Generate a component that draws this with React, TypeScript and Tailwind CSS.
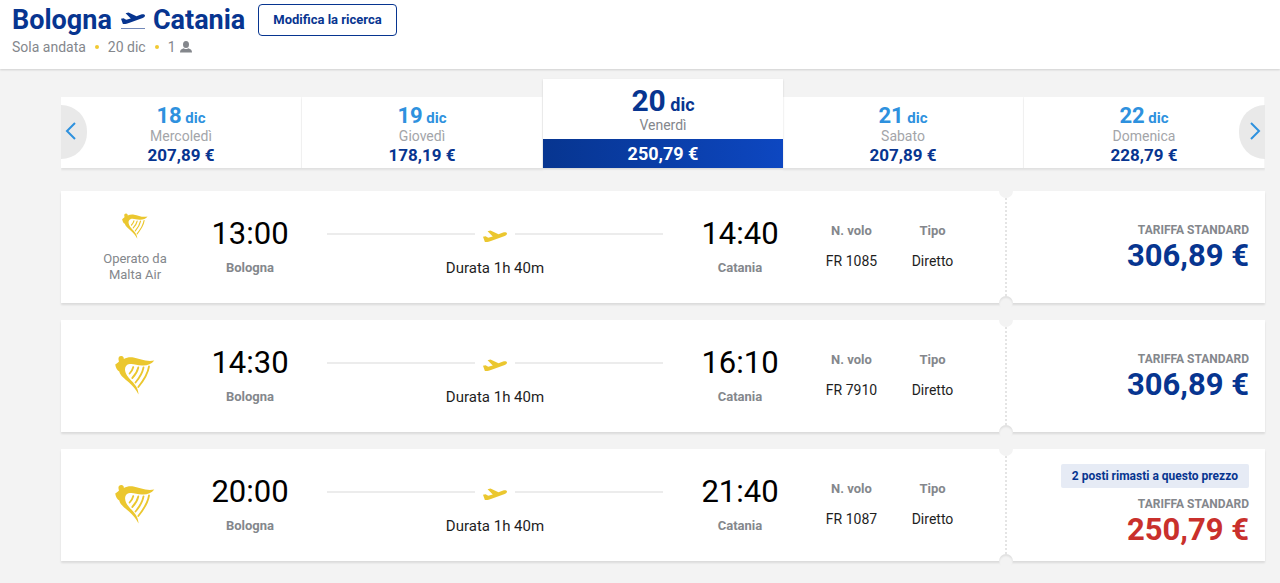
type Day = {
  day: string;
  weekday: string;
  price: string;
  selected?: boolean;
};

type Flight = {
  departure: string;
  arrival: string;
  number: string;
  price: string;
  operatedBy?: string;
  seatsLeft?: string;
};

const days: Day[] = [
  { day: "18", weekday: "Mercoledì", price: "207,89 €" },
  { day: "19", weekday: "Giovedì", price: "178,19 €" },
  { day: "20", weekday: "Venerdì", price: "250,79 €", selected: true },
  { day: "21", weekday: "Sabato", price: "207,89 €" },
  { day: "22", weekday: "Domenica", price: "228,79 €" },
];

const flights: Flight[] = [
  { departure: "13:00", arrival: "14:40", number: "FR 1085", price: "306,89 €", operatedBy: "Malta Air" },
  { departure: "14:30", arrival: "16:10", number: "FR 7910", price: "306,89 €" },
  {
    departure: "20:00",
    arrival: "21:40",
    number: "FR 1087",
    price: "250,79 €",
    seatsLeft: "2 posti rimasti a questo prezzo",
  },
];

function Plane({ className }: { className: string }) {
  return (
    <svg viewBox="0 0 24 13" className={className} fill="currentColor" aria-hidden="true">
      <path d="M0 6.800l2.600-.6 2.600 1.500 4.600-1.300L4.600 1.200 7.500.4l8 3.900 4.600-1.700c1.700-.6 3.400-.3 3.800.6.4 1-.6 2-2.200 2.700L8.600 10.800c-2.500.9-5 1.600-6.700 1.200z" />
    </svg>
  );
}

function Harp({ className }: { className: string }) {
  return (
    <svg viewBox="0 0 40 40" className={className} aria-hidden="true">
      <path
        fill="#ebc72f"
        d="M3.500 4.200C3.200 2 4.600.8 6.300.9c1.800.1 2.800 1.500 2.500 3.100C11.500 2.500 15 1.900 18.500 2.500c6.500 1.100 12 4.500 20.800 3-2.800 3.800-7.300 5.300-12.300 5C21.500 10.200 17.500 8 13.500 9.300c-3.700 1.300-4.200 5.200-2.500 9.200 2.300 5.200 8.500 9 11 14.500 1 2.200 1.300 4.300 1.500 6.500-2.500-4.800-5.500-8.500-9.500-12C9.500 23.600 5 20.500 4.300 16.500 2.300 15.500.8 13 .2 9.500c1.100-.4 2.400-1.500 3.900-3.200-.4-.6-.6-1.300-.6-2.100z"
      />
      <g fill="none" stroke="#ebc72f" strokeWidth="1.800" strokeLinecap="round">
        <path d="M18.300 12C17.800 14 16.500 16.500 14.600 18.500" />
        <path d="M23.300 12.500C22.500 16 20.200 20 17.300 23" />
        <path d="M28.500 12.500C27.500 17.500 24.300 23 20.500 27.500" />
        <path d="M34 11.500C33 18 28.500 25.500 23.300 32" />
      </g>
    </svg>
  );
}

function Passenger() {
  return (
    <svg viewBox="0 0 12 12" className="size-3" fill="currentColor" aria-hidden="true">
      <ellipse cx="6" cy="3.500" rx="3" ry="3.500" />
      <path d="M0 11.500c0-2.500 1-3.500 3.800-4.300a3.500 3.500 0 004.400 0C11 8 12 9 12 11.500z" />
    </svg>
  );
}

function Header() {
  return (
    <header className="relative h-[69px] bg-white px-3 pt-1 shadow-[0_1px_2px_rgba(0,0,0,0.15)]">
      <div className="flex h-8 items-center">
        <h1 className="flex items-center text-[27px] font-bold text-[#073590]">
          Bologna
          <span className="mr-2 ml-[9px] flex w-6 flex-col gap-[3px]">
            <Plane className="h-[13px] w-6" />
            <span className="h-px w-full bg-[#7288b8]" />
          </span>
          Catania
        </h1>
        <button
          type="button"
          className="ml-[13px] h-8 rounded-sm border border-[#073590] px-[14px] text-[13px] font-bold text-[#073590]"
        >
          Modifica la ricerca
        </button>
      </div>
      <p className="mt-px flex items-center gap-[9px] text-sm text-[#84878c]">
        Sola andata
        <span className="size-1 rounded-full bg-[#f1c933]" />
        20 dic
        <span className="size-1 rounded-full bg-[#f1c933]" />
        <span className="flex items-center gap-1">
          1
          <Passenger />
        </span>
      </p>
    </header>
  );
}

function DayTab({ day, weekday, price, selected }: Day) {
  if (selected) {
    return (
      <button
        type="button"
        className="relative flex h-[89px] flex-1 flex-col items-center bg-white pt-1 shadow-[0_1px_2px_rgba(0,0,0,0.15)]"
      >
        <span className="text-[30px] leading-9 font-bold text-[#073590]">
          {day}
          <span className="text-lg"> dic</span>
        </span>
        <span className="text-sm leading-3 text-[#84878c]">{weekday}</span>
        <span className="mt-auto w-full bg-linear-to-r from-[#073590] to-[#0d47c1] text-lg leading-[29px] font-bold text-white">
          {price}
        </span>
      </button>
    );
  }
  return (
    <button
      type="button"
      className="flex h-[71px] flex-1 flex-col items-center border-r border-[#f6f6f6] bg-white pt-[7px] shadow-[0_2px_2px_rgba(0,0,0,0.08)]"
    >
      <span className="text-[22px] leading-6 font-bold text-[#2e91de]">
        {day}
        <span className="text-[15px]"> dic</span>
      </span>
      <span className="text-sm leading-3 text-[#a3a5a9]">{weekday}</span>
      <span className="mt-px text-[17px] leading-6 font-bold text-[#073590]">{price}</span>
    </button>
  );
}

function DateCarousel() {
  return (
    <nav aria-label="Date" className="relative flex items-end overflow-x-clip">
      {days.map((day) => (
        <DayTab key={day.day} {...day} />
      ))}
      <button
        type="button"
        aria-label="Giorni precedenti"
        className="absolute bottom-[9px] left-0 flex h-[54px] w-[26px] items-center rounded-r-full bg-[#e9e9e9] pb-0.5 pl-1 text-[#2e91de]"
      >
        <svg viewBox="0 0 12 18" className="h-[18px] w-3" fill="none" stroke="currentColor" strokeWidth="2">
          <path d="M10 1L2 9l8 8" />
        </svg>
      </button>
      <button
        type="button"
        aria-label="Giorni successivi"
        className="absolute right-0 bottom-[9px] flex h-[54px] w-[26px] items-center justify-end rounded-l-full bg-[#e9e9e9] pr-1 pb-0.5 text-[#2e91de]"
      >
        <svg viewBox="0 0 12 18" className="h-[18px] w-3" fill="none" stroke="currentColor" strokeWidth="2">
          <path d="M2 1l8 8-8 8" />
        </svg>
      </button>
    </nav>
  );
}

function Stop({ time, city }: { time: string; city: string }) {
  return (
    <div className="w-[82px] text-center">
      <p className="text-[31px] leading-10 text-black">{time}</p>
      <p className="mt-1 text-[13px] leading-5 font-bold text-[#84878c]">{city}</p>
    </div>
  );
}

function Detail({ label, value }: { label: string; value: string }) {
  return (
    <div className="w-[81px] text-center">
      <dt className="text-[13px] leading-5 font-bold text-[#84878c]">{label}</dt>
      <dd className="mt-[10px] text-sm leading-5 text-[#1e1e1e]">{value}</dd>
    </div>
  );
}

function FlightCard({ flight }: { flight: Flight }) {
  return (
    <li className="flex h-28 bg-white shadow-[0_2px_2px_rgba(0,0,0,0.1)]">
      <div className="flex flex-1 items-center pr-8 pb-0.5">
        <div className="flex w-[148px] flex-col items-center">
          {flight.operatedBy ? (
            <>
              <Harp className="mt-1 size-[26px]" />
              <p className="mt-3 text-center text-[13px] leading-4 text-[#84878c]">
                Operato da
                <br />
                {flight.operatedBy}
              </p>
            </>
          ) : (
            <Harp className="size-10" />
          )}
        </div>
        <Stop time={flight.departure} city="Bologna" />
        <div className="mx-9 flex-1">
          <div className="flex h-10 items-center gap-2">
            <span className="h-0.5 flex-1 bg-[#ececec]" />
            <Plane className="mt-1 h-[13px] w-6 text-[#ebc72f]" />
            <span className="h-0.5 flex-1 bg-[#ececec]" />
          </div>
          <p className="mt-1 text-center text-[15px] leading-5 text-[#1e1e1e]">Durata 1h 40m</p>
        </div>
        <Stop time={flight.arrival} city="Catania" />
        <dl className="ml-[30px] flex">
          <Detail label="N. volo" value={flight.number} />
          <Detail label="Tipo" value="Diretto" />
        </dl>
      </div>
      <div className="relative flex w-[260px] flex-col items-end justify-center border-l-2 border-dotted border-[#e4e4e4] pt-0.5 pr-4">
        <span className="absolute -top-[7px] -left-2 size-[14px] rounded-full bg-[#f3f3f3]" />
        <span className="absolute -bottom-[7px] -left-2 size-[14px] rounded-full bg-[#f3f3f3] shadow-[inset_0_2px_2px_rgba(0,0,0,0.08)]" />
        {flight.seatsLeft && (
          <p className="mb-2 rounded-xs bg-[#e6ebf5] px-[11px] text-xs leading-6 font-bold text-[#073590]">
            {flight.seatsLeft}
          </p>
        )}
        <p className="text-xs leading-4 font-bold text-[#84878c]">TARIFFA STANDARD</p>
        <p className={`text-[31px] leading-9 font-bold ${flight.seatsLeft ? "text-[#c9302c]" : "text-[#073590]"}`}>
          {flight.price}
        </p>
      </div>
    </li>
  );
}

export default function App() {
  return (
    <div className="min-h-screen bg-[#f3f3f3] font-[Roboto,sans-serif]">
      <Header />
      <main className="pt-[10px] pr-[15px] pb-[22px] pl-[61px]">
        <DateCarousel />
        <ul className="mt-[23px] flex flex-col gap-[17px]">
          {flights.map((flight) => (
            <FlightCard key={flight.number} flight={flight} />
          ))}
        </ul>
      </main>
    </div>
  );
}
